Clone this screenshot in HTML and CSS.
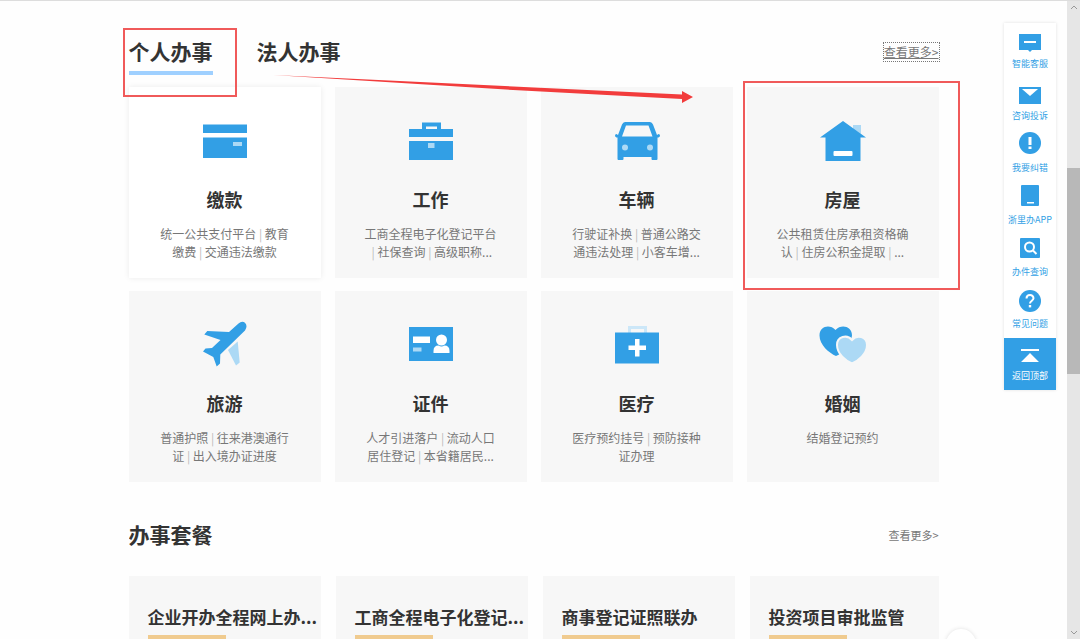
FILE: index.html
```html
<!DOCTYPE html>
<html lang="zh-CN">
<head>
<meta charset="utf-8">
<title>办事服务</title>
<link rel="stylesheet" href="styles.css">
</head>
<body>
<div class="window">
  <main class="page">
    <div class="container">
      <section class="services">
        <header class="section-head">
          <nav class="tabs">
            <button class="tab tab-active" type="button">个人办事</button>
            <button class="tab" type="button">法人办事</button>
          </nav>
          <a class="more more-focused" href="#">查看更多&gt;</a>
        </header>
        <div class="service-grid">
          <a class="card card-active" href="#">
            <svg class="card-icon" viewBox="0 0 48 48"><path class="main" d="M2 7.500h44V16H2zM2 20.500h44V41H2z"/><path class="soft" d="M32 25h9v4h-9z"/></svg>
            <h3 class="card-title">缴款</h3>
            <p class="card-text">统一公共支付平台<i> | </i>教育<br>缴费<i> | </i>交通违法缴款</p>
          </a>
          <a class="card" href="#">
            <svg class="card-icon" viewBox="0 0 48 48"><path class="main" fill-rule="evenodd" d="M15 12V5.500h19V12h12v8H2v-8zM19 9.500V12h11V9.500zM2 24h44v19H2z"/><path class="soft" d="M21 26h6.500v5H21z"/></svg>
            <h3 class="card-title">工作</h3>
            <p class="card-text">工商全程电子化登记平台<br><i> | </i>社保查询<i> | </i>高级职称...</p>
          </a>
          <a class="card" href="#">
            <svg class="card-icon" viewBox="0 0 48 48"><path class="main" fill-rule="evenodd" d="M12 5h25q2 0 3 2.500l4 10.500 1.500-1q1.500 0 1.500 1.500T45.500 20.500h-1V42q0 1-1 1h-4q-1 0-1-1v-2H10.500v2q0 1-1 1h-4q-1 0-1-1V20.500h-1Q2 20 2 18.500T3.500 17l1.500 1L9 7.500Q10 5 12 5zM13 8.500L9 19.500h30.500L35.500 8.500z"/><circle class="soft" cx="12" cy="30.500" r="3"/><circle class="soft" cx="37" cy="30.500" r="3"/></svg>
            <h3 class="card-title">车辆</h3>
            <p class="card-text">行驶证补换<i> | </i>普通公路交<br>通违法处理<i> | </i>小客车增...</p>
          </a>
          <a class="card" href="#">
            <svg class="card-icon" viewBox="0 0 48 48"><path class="soft" d="M34 8h8v9l-8-5z"/><path class="main" d="M24 4L47 20.500h-5.500V44h-35V20.500H1z"/><rect class="white" x="14.500" y="34" width="19" height="5" rx="1"/></svg>
            <h3 class="card-title">房屋</h3>
            <p class="card-text">公共租赁住房承租资格确<br>认<i> | </i>住房公积金提取<i> | </i>...</p>
          </a>
          <a class="card" href="#">
            <svg class="card-icon" viewBox="0 0 48 48"><path class="soft" d="M36.700 20.500l2 21-3.700 3-8-15.500z"/><path class="main" d="M3.300 13.500l3-3.500L28 11l9.500-8.500Q41-.500 44 1.800 47 5 44 9.500L19.300 33.500l-.3 9-3.300 3-3.400-9.500L2 30.500l2.500-3 6.500-.5 8.500-8z"/></svg>
            <h3 class="card-title">旅游</h3>
            <p class="card-text">普通护照<i> | </i>往来港澳通行<br>证<i> | </i>出入境办证进度</p>
          </a>
          <a class="card" href="#">
            <svg class="card-icon" viewBox="0 0 48 48"><path class="main" d="M2 6h44v34H2z"/><path class="white" d="M6 15.500h17V22H6z"/><path class="soft" d="M6 26.500h8.500v4H6z"/><circle class="white" cx="34.500" cy="19" r="5.500"/><path class="white" d="M26.500 32v-2q0-5.500 5-5.500 3 2 6 0 5 0 5 5.500v2z"/></svg>
            <h3 class="card-title">证件</h3>
            <p class="card-text">人才引进落户<i> | </i>流动人口<br>居住登记<i> | </i>本省籍居民...</p>
          </a>
          <a class="card" href="#">
            <svg class="card-icon" viewBox="0 0 48 48"><path class="pale" fill-rule="evenodd" d="M15 5h19v7H15zM18 8v4h13V8z"/><path class="main" d="M2 11.500h44v31H2z"/><path class="white" d="M22 18h4.500v6.500H33V29h-6.500v6.500H22V29h-6.500v-4.500H22z"/></svg>
            <h3 class="card-title">医疗</h3>
            <p class="card-text">医疗预约挂号<i> | </i>预防接种<br>证办理</p>
          </a>
          <a class="card" href="#">
            <svg class="card-icon" viewBox="0 0 48 48"><path class="main" d="M17 35C10 32 .500 24 .500 14.500.500 5 11 3 16.500 9 22 3 33 5 33 14.500 32 24 24 32 17 35z"/><path class="soft outlined" d="M33 42.500C27 40 18 33 18 24c0-8.500 10-11 15-5 5-6 15-3.500 15 5 0 9-9 16-15 18.500z"/></svg>
            <h3 class="card-title">婚姻</h3>
            <p class="card-text">结婚登记预约</p>
          </a>
        </div>
      </section>
      <section class="packages">
        <header class="section-head">
          <h2 class="section-title">办事套餐</h2>
          <a class="more more-small" href="#">查看更多&gt;</a>
        </header>
        <div class="package-grid">
          <a class="package" href="#"><h3 class="package-title">企业开办全程网上办...</h3></a>
          <a class="package" href="#"><h3 class="package-title">工商全程电子化登记...</h3></a>
          <a class="package" href="#"><h3 class="package-title">商事登记证照联办</h3></a>
          <a class="package" href="#"><h3 class="package-title">投资项目审批监管</h3></a>
        </div>
      </section>
      <div class="mark mark-tab"></div>
      <div class="mark mark-card"></div>
      <svg class="arrow" viewBox="0 0 420 28"><path d="M0 0L409 19.500V16l11 6-11 6v-4L240 15z"/></svg>
      <div class="bubble"></div>
    </div>
  </main>
  <aside class="side">
    <a class="side-item" href="#"><svg class="side-icon" viewBox="0 0 22 26"><path class="main" d="M0 6h22v16h-9l-2 2-2-2H0z"/><path class="white" d="M5 13h12v2H5z"/></svg>智能客服</a>
    <a class="side-item" href="#"><svg class="side-icon" viewBox="0 0 22 26"><path class="main" d="M0 7h22v17H0z"/><path class="white" d="M3 9h16l-8 7z"/></svg>咨询投诉</a>
    <a class="side-item" href="#"><svg class="side-icon" viewBox="0 0 22 26"><circle class="main" cx="11" cy="11" r="11"/><path class="white" d="M9.500 5h3v8h-3zM9.500 14.500h3v2.500h-3z"/></svg>我要纠错</a>
    <a class="side-item" href="#"><svg class="side-icon" viewBox="0 0 22 26"><rect class="main" x="2" y="1" width="18" height="21" rx="1"/><path class="white" d="M8 18h7v1.500H8z"/></svg>浙里办APP</a>
    <a class="side-item" href="#"><svg class="side-icon" viewBox="0 0 22 26"><rect class="main" x="1" y="2" width="20" height="20" rx="1"/><circle class="line" cx="10.500" cy="11" r="4.500"/><path class="line" d="M14 14.500l3.500 3.500"/></svg>办件查询</a>
    <a class="side-item" href="#"><svg class="side-icon" viewBox="0 0 22 26"><circle class="main" cx="11" cy="13" r="11"/><path class="line" d="M7.500 10.500C7.500 6 14.500 6 14.500 10.300c0 2.200-3.500 2.700-3.500 5.200"/><path class="white" d="M9.800 17h2.400v2.400H9.800z"/></svg>常见问题</a>
    <a class="side-item side-top" href="#"><svg class="side-icon" viewBox="0 0 22 26"><path class="white" d="M2 9h18v2H2zM11 13l9 9H2z"/></svg>返回顶部</a>
  </aside>
  <div class="scrollbar">
    <svg class="scroll-arrow" viewBox="0 0 8 6"><path d="M1 5l3-3 3 3"/></svg>
    <div class="scroll-track"><div class="scroll-thumb"></div></div>
    <svg class="scroll-arrow" viewBox="0 0 8 6"><path d="M1 1l3 3 3-3"/></svg>
  </div>
</div>
</body>
</html>
```

FILE: styles.css
```css
* {
  box-sizing: border-box;
}

body {
  margin: 0;
  color: #333;
  background: #fefefe;
  font-family: "Noto Sans CJK SC", "Liberation Sans", sans-serif;
}

h2,
h3,
p {
  margin: 0;
}

a {
  color: inherit;
  text-decoration: none;
}

button {
  padding: 0;
  border: 0;
  background: none;
  color: inherit;
  font: inherit;
  cursor: pointer;
}

.main { fill: #329fe5; }
.soft { fill: #acd9f5; }
.pale { fill: #cce7f8; }
.white { fill: #fff; }
.line { fill: none; stroke: #fff; stroke-width: 2; }
.outlined { stroke: #f7f7f7; stroke-width: 2; }

.window {
  position: relative;
  display: flex;
  height: 100vh;
  overflow: hidden;
  border-top: 1px solid #ddd;
}

.page {
  flex: 1;
  min-width: 0;
}

.container {
  position: relative;
  max-width: 810px;
  height: 100%;
  margin: 0 auto;
}

.section-head {
  display: flex;
  align-items: flex-start;
  justify-content: space-between;
}

.services .section-head {
  height: 86px;
  padding-top: 34px;
}

.tabs {
  display: flex;
  gap: 44px;
}

.tab {
  height: 40px;
  padding-bottom: 4px;
  font-size: 21px;
  font-weight: 700;
  line-height: 32px;
  border-bottom: 4px solid transparent;
}

.tab-active {
  border-color: #9fd0ff;
}

.more {
  margin-top: 8px;
  color: #777;
  font-size: 12px;
  line-height: 18px;
}

.more-focused {
  outline: 1px dotted #777;
  text-decoration: underline;
}

.more-small {
  font-size: 11px;
}

.service-grid {
  display: grid;
  grid-template-columns: repeat(4, minmax(0, 1fr));
  gap: 13px 14px;
}

.card {
  display: flex;
  flex-direction: column;
  align-items: center;
  min-height: 191px;
  padding: 30px 20px 16px;
  background: #f7f7f7;
  text-align: center;
}

.card-active {
  background: #fff;
  box-shadow: 0 0 6px rgba(0, 0, 0, 0.08);
}

.card-icon {
  width: 48px;
  height: 48px;
}

.card-title {
  margin-top: 20px;
  font-size: 18px;
  line-height: 28px;
}

.card-text {
  margin-top: 12px;
  color: #777;
  font-size: 12px;
  line-height: 18px;
  white-space: nowrap;
}

.card-text i {
  color: #bbb;
  font-style: normal;
  white-space: pre;
}

.packages {
  overflow: hidden;
}

.packages .section-head {
  height: 94px;
  padding-top: 36px;
}

.section-title {
  font-size: 21px;
  line-height: 32px;
}

.package-grid {
  display: grid;
  grid-template-columns: repeat(4, minmax(0, 1fr));
  gap: 15px;
  margin-right: -3px;
}

.package {
  min-height: 120px;
  padding: 28px 5px 20px 19px;
  background: #f7f7f7;
}

.package-title {
  font-size: 17px;
  line-height: 26px;
  white-space: nowrap;
}

.package-title::after {
  content: "";
  display: block;
  width: 78px;
  height: 5px;
  margin-top: 5px;
  background: #f0cb8f;
}

/* Highlights drawn over the page */
.mark {
  position: absolute;
  border: 2px solid #f05a5a;
  pointer-events: none;
}

.mark-tab {
  top: 27px;
  left: -6px;
  width: 114px;
  height: 69px;
}

.mark-card {
  top: 80px;
  right: -21px;
  width: 217px;
  height: 209px;
}

.arrow {
  position: absolute;
  top: 74px;
  left: 144px;
  width: 420px;
  height: 28px;
  fill: #f23c3c;
  pointer-events: none;
}

.bubble {
  position: absolute;
  right: -37px;
  bottom: -20px;
  width: 30px;
  height: 30px;
  border-radius: 50%;
  background: #fff;
  box-shadow: 0 0 4px rgba(0, 0, 0, 0.12);
}

.side {
  position: absolute;
  top: 22px;
  right: 24px;
  width: 52px;
  padding-top: 3px;
  background: #fff;
  box-shadow: 0 0 3px rgba(0, 0, 0, 0.12);
}

.side-item {
  display: flex;
  flex-direction: column;
  align-items: center;
  gap: 3px;
  height: 52px;
  padding-top: 2px;
  color: #329fe5;
  font-size: 9px;
  line-height: 13px;
  white-space: nowrap;
}

.side-icon {
  width: 22px;
  height: 26px;
}

.side-top {
  background: #329fe5;
  color: #fff;
}

.scrollbar {
  display: flex;
  flex-direction: column;
  align-items: center;
  width: 13px;
  padding: 3px 0;
  background: #e6e6e6;
}

.scroll-arrow {
  width: 8px;
  height: 6px;
  fill: none;
  stroke: #999;
}

.scroll-track {
  flex: 1;
  width: 100%;
  padding-top: 158px;
}

.scroll-thumb {
  height: 206px;
  background: #b8b8b8;
}
```
